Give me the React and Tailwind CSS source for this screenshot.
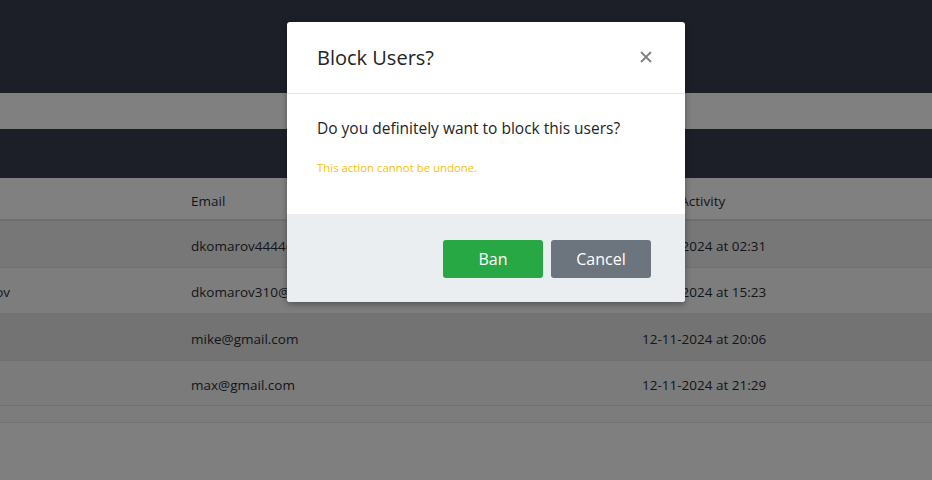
import React from "react";

const rows = [
  { name: "", email: "dkomarov4444@gmail.com", date: "11-11-2024 at 02:31", bg: "bg-[#777777]", h: "h-[47px]" },
  { name: "Dmitry Komarov", email: "dkomarov310@gmail.com", date: "11-11-2024 at 15:23", bg: "bg-[#7d7d7d]", h: "h-[46px]" },
  { name: "", email: "mike@gmail.com", date: "12-11-2024 at 20:06", bg: "bg-[#737373]", h: "h-[47px]" },
  { name: "", email: "max@gmail.com", date: "12-11-2024 at 21:29", bg: "bg-[#7b7b7b]", h: "h-[45px]" },
];

export default function App() {
  return (
    <div
      className="relative h-[480px] w-[932px] overflow-hidden bg-[#7f7f7f] text-[#131418]"
      style={{ fontFamily: '"Open Sans", "Noto Sans", sans-serif' }}
    >
      {/* dimmed page */}
      <div className="h-[93px] bg-[#1c1f27]" />
      <div className="h-[36px] bg-[#808080]" />
      <div className="h-[49px] bg-[#1c1f27]" />
      <div className="overflow-hidden">
        <div className="-ml-[100px] w-[1100px] text-[13.5px]">
          <div className="flex h-[43px] items-center border-b-2 border-[#6e6e6e] bg-[#808080] pt-[6px]">
            <div className="w-[291px]" />
            <div className="w-[451px]">Email</div>
            <div className="pl-[9px]">Last Activity</div>
          </div>
          {rows.map((r, i) => (
            <div
              key={i}
              className={`flex ${r.h} items-center border-b border-[#707070] pt-[4px] ${r.bg}`}
            >
              <div className="flex w-[291px] justify-end pr-[181px]">{r.name}</div>
              <div className="w-[451px]">{r.email}</div>
              <div>{r.date}</div>
            </div>
          ))}
          <div className="h-[17px] border-b border-[#747474] bg-[#7c7c7c]" />
        </div>
      </div>

      {/* modal */}
      <div className="absolute left-[287px] top-[22px] w-[398px] overflow-hidden rounded-[3px] bg-white shadow-[0_2px_6px_rgba(0,0,0,0.35)]">
        <div className="flex h-[72px] items-center justify-between border-b border-[#e5e7e9] pl-[30px] pr-[33px]">
          <h2 className="text-[20px] font-medium text-[#212529]">Block Users?</h2>
          <svg width="12" height="12" viewBox="0 0 12 12" className="mt-[-1px]">
            <path d="M1 1L11 11M11 1L1 11" stroke="#7d8083" strokeWidth="1.8" />
          </svg>
        </div>
        <div className="h-[120px] px-[30px] pt-[23px]">
          <p className="text-[15.5px] text-[#212529]">Do you definitely want to block this users?</p>
          <p className="mt-[19px] text-[11.4px] text-[#f8bf06]">This action cannot be undone.</p>
        </div>
        <div className="flex h-[88px] items-start justify-end gap-[8px] bg-[#ebeef0] pr-[34px] pt-[26px]">
          <button className="h-[38px] w-[100px] rounded-[3px] bg-[#28a745] text-[16px] text-white">Ban</button>
          <button className="h-[38px] w-[100px] rounded-[3px] bg-[#6c757d] text-[16px] text-white">Cancel</button>
        </div>
      </div>
    </div>
  );
}
